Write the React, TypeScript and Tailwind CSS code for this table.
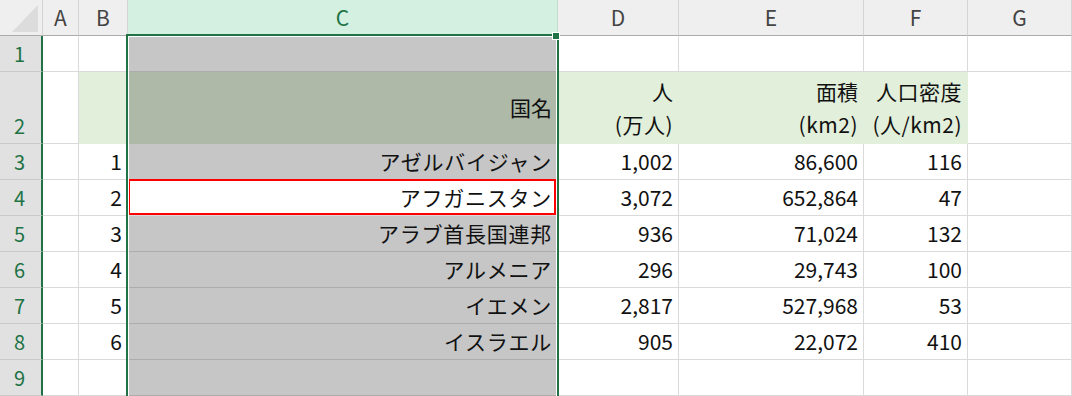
import React from 'react'

const font = { fontFamily: '"Noto Sans CJK JP", "Noto Sans", sans-serif' }

type CellProps = {
  w: string
  cls?: string
  children?: React.ReactNode
}

// one data cell: right aligned, vertical centre, like Excel's numbers
function Cell({ w, cls = 'bg-white border-r border-b border-[#dadada]', children }: CellProps) {
  return (
    <div className={`${w} ${cls} relative flex h-full shrink-0 items-center justify-end pr-[5px] text-[21px] text-[#111]`}>
      {children}
    </div>
  )
}

function RowHead({ n }: { n: number }) {
  return (
    <div className="flex h-full w-[43px] shrink-0 items-end justify-center border-r-2 border-b border-r-[#217346] border-b-[#c9c9c9] bg-[#e1e1e1] pr-[2px] text-[20px] leading-[34px] text-[#217346]">
      {n}
    </div>
  )
}

const gray = 'bg-[#c6c6c6] border-r border-b border-[#adadad]'

const rows = [
  { n: 3, no: '1', name: 'アゼルバイジャン', pop: '1,002', area: '86,600', dens: '116' },
  { n: 4, no: '2', name: 'アフガニスタン', pop: '3,072', area: '652,864', dens: '47' },
  { n: 5, no: '3', name: 'アラブ首長国連邦', pop: '936', area: '71,024', dens: '132' },
  { n: 6, no: '4', name: 'アルメニア', pop: '296', area: '29,743', dens: '100' },
  { n: 7, no: '5', name: 'イエメン', pop: '2,817', area: '527,968', dens: '53' },
  { n: 8, no: '6', name: 'イスラエル', pop: '905', area: '22,072', dens: '410' },
]

export default function App() {
  return (
    <div className="relative h-[396px] w-[1072px] overflow-hidden bg-white" style={font}>
      {/* column headers */}
      <div className="flex h-[36px] text-[21px] text-[#444]">
        <div className="relative h-full w-[43px] shrink-0 border-r border-b border-r-[#d4d4d4] border-b-[#ababab] bg-[#efefef]">
          <svg className="absolute left-0 top-0" width="43" height="35">
            <polygon points="38,5 38,32 12,32" fill="#dcdcdc" />
          </svg>
        </div>
        <div className="flex h-full w-[36px] shrink-0 items-center justify-center border-r border-b border-r-[#d4d4d4] border-b-[#ababab] bg-[#efefef]">A</div>
        <div className="flex h-full w-[49px] shrink-0 items-center justify-center border-r border-b border-r-[#d4d4d4] border-b-[#ababab] bg-[#efefef]">B</div>
        <div className="flex h-full w-[430px] shrink-0 items-center justify-center border-r border-b border-r-[#c0dccb] border-b-[#217346] bg-[#d3f0e0] text-[#217346]">C</div>
        <div className="flex h-full w-[121px] shrink-0 items-center justify-center border-r border-b border-r-[#d4d4d4] border-b-[#ababab] bg-[#efefef]">D</div>
        <div className="flex h-full w-[185px] shrink-0 items-center justify-center border-r border-b border-r-[#d4d4d4] border-b-[#ababab] bg-[#efefef]">E</div>
        <div className="flex h-full w-[104px] shrink-0 items-center justify-center border-r border-b border-r-[#d4d4d4] border-b-[#ababab] bg-[#efefef]">F</div>
        <div className="flex h-full w-[104px] shrink-0 items-center justify-center border-r border-b border-r-[#d4d4d4] border-b-[#ababab] bg-[#efefef]">G</div>
      </div>

      {/* row 1 */}
      <div className="flex h-[36px]">
        <RowHead n={1} />
        <Cell w="w-[36px]" />
        <Cell w="w-[49px]" />
        <Cell w="w-[430px]" cls={gray} />
        <Cell w="w-[121px]" />
        <Cell w="w-[185px]" />
        <Cell w="w-[104px]" />
        <Cell w="w-[104px]" />
      </div>

      {/* row 2: header labels */}
      <div className="flex h-[72px]">
        <RowHead n={2} />
        <Cell w="w-[36px]" />
        <Cell w="w-[49px]" cls="bg-[#e2efda] border-b border-[#e2efda]" />
        <Cell w="w-[430px]" cls="bg-[#aeb9a8] border-r border-b border-[#aeb9a8]">国名</Cell>
        <Cell w="w-[121px]" cls="bg-[#e2efda] border-r border-b border-[#e2efda]">
          <div className="flex flex-col items-end leading-[33px]">
            <span>人</span>
            <span className="tracking-[0.5px]">(万人)</span>
          </div>
        </Cell>
        <Cell w="w-[185px]" cls="bg-[#e2efda] border-r border-b border-[#e2efda]">
          <div className="flex flex-col items-end leading-[33px]">
            <span>面積</span>
            <span className="tracking-[0.5px]">(km2)</span>
          </div>
        </Cell>
        <Cell w="w-[104px]" cls="bg-[#e2efda] border-r border-b border-[#e2efda]">
          <div className="flex flex-col items-end leading-[33px] tracking-[0.5px]">
            <span>人口密度</span>
            <span>(人/km2)</span>
          </div>
        </Cell>
        <Cell w="w-[104px]" />
      </div>

      {rows.map((r) => (
        <div key={r.n} className="flex h-[36px]">
          <RowHead n={r.n} />
          <Cell w="w-[36px]" />
          <Cell w="w-[49px]">{r.no}</Cell>
          {r.n === 4 ? (
            <Cell w="w-[430px]">
              <div className="absolute -top-px left-0 right-px bottom-0 border-2 border-[#ff0000]" />
              <span className="relative tracking-[0.75px]">{r.name}</span>
            </Cell>
          ) : (
            <Cell w="w-[430px]" cls={gray}>
              <span className="tracking-[0.75px]">{r.name}</span>
            </Cell>
          )}
          <Cell w="w-[121px]">{r.pop}</Cell>
          <Cell w="w-[185px]">{r.area}</Cell>
          <Cell w="w-[104px]">{r.dens}</Cell>
          <Cell w="w-[104px]" />
        </div>
      ))}

      {/* row 9 */}
      <div className="flex h-[36px]">
        <RowHead n={9} />
        <Cell w="w-[36px]" />
        <Cell w="w-[49px]" />
        <Cell w="w-[430px]" cls={gray} />
        <Cell w="w-[121px]" />
        <Cell w="w-[185px]" />
        <Cell w="w-[104px]" />
        <Cell w="w-[104px]" />
      </div>

      {/* column C selection frame */}
      <div className="pointer-events-none absolute left-[126px] top-[34px] h-[380px] w-[433px] border-2 border-[#217346] shadow-[inset_0_0_0_1px_#ffffff]" />
      {/* fill handle */}
      <div className="absolute left-[552px] top-[32px] h-[8px] w-[8px] border border-white bg-[#217346]" />
    </div>
  )
}
